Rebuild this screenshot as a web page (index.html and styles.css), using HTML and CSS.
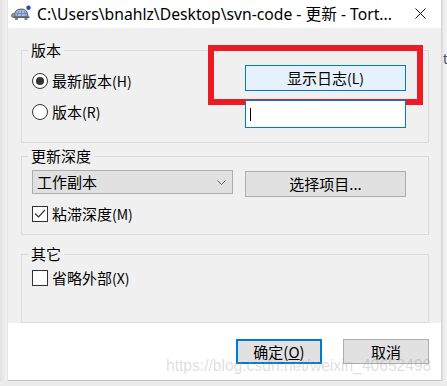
FILE: index.html
```html
<!DOCTYPE html>
<html lang="zh-CN">
<head>
<meta charset="utf-8">
<title>更新</title>
<link rel="stylesheet" href="styles.css">
</head>
<body>
<div class="screen">
  <div class="left-edge"></div>
  <div class="window">
    <div class="titlebar">
      <svg class="app-icon" width="20" height="17" viewBox="0 0 20 17">
        <path d="M3 12 Q3 4 10.5 4 Q17 4 17 12 Z" fill="#a9bde6" stroke="#4c5260" stroke-width="1"/>
        <path d="M6 11 L8 6 M10.5 11 L10.5 5 M15 11 L13 6 M4.5 8.5 L16.5 8.5" stroke="#6a7fb0" stroke-width="0.8" fill="none"/>
        <circle cx="2.3" cy="10.5" r="2" fill="#8c929c" stroke="#4c5260" stroke-width="0.6"/>
        <rect x="4" y="12" width="3" height="3" fill="#7d838d"/>
        <rect x="13.5" y="12" width="3" height="3" fill="#7d838d"/>
        <rect x="2.5" y="11.5" width="16" height="1.5" fill="#5a606b"/>
        <circle cx="17.5" cy="2.8" r="2.2" fill="#1e4ea8"/>
      </svg>
      <span class="title">C:\Users\bnahlz\Desktop\svn-code - 更新 - Tort...</span>
      <svg class="close" width="11" height="11" viewBox="0 0 11 11">
        <path d="M0.5 0.5 L10.5 10.5 M10.5 0.5 L0.5 10.5" stroke="#111" stroke-width="1" fill="none"/>
      </svg>
    </div>

    <div class="content">
      <fieldset class="group g-version">
        <legend>版本</legend>
        <div class="split">
          <div class="radios">
            <label class="opt"><span class="radio on"></span><span>最新版本<span class="k">(H)</span></span></label>
            <label class="opt"><span class="radio"></span><span>版本<span class="k">(R)</span></span></label>
          </div>
          <div class="col">
            <div class="btn btn-hot">显示日志<span class="k">(L)</span></div>
            <div class="edit"><span class="caret"></span></div>
          </div>
        </div>
      </fieldset>

      <fieldset class="group g-depth">
        <legend>更新深度</legend>
        <div class="split top-row">
          <div class="combo"><span>工作副本</span>
            <svg class="chev" width="9" height="5" viewBox="0 0 9 5"><path d="M0.5 0.5 L4.5 4.5 L8.5 0.5" stroke="#606060" stroke-width="1" fill="none"/></svg>
          </div>
          <div class="btn btn-pick">选择项目...</div>
        </div>
        <label class="opt"><span class="check"><svg width="14" height="14" viewBox="0 0 14 14"><path d="M2 6.5 L5.5 10 L12 3" stroke="#333" stroke-width="1.2" fill="none"/></svg></span><span>粘滞深度<span class="k">(M)</span></span></label>
      </fieldset>

      <fieldset class="group g-other">
        <legend>其它</legend>
        <label class="opt"><span class="check"></span><span>省略外部<span class="k">(X)</span></span></label>
      </fieldset>
    </div>

    <div class="footer">
      <div class="btn btn-ok">确定(<u>O</u>)</div>
      <div class="btn btn-cancel">取消</div>
    </div>

    <div class="annot"></div>
    <div class="watermark">https://blog.csdn.net/weixin_40652498</div>
  </div>
  <div class="right-edge"><span class="peek">t</span></div>
</div>
</body>
</html>
```

FILE: styles.css
```css
* { box-sizing: border-box; }
html, body { margin: 0; padding: 0; }
body {
  width: 447px;
  height: 386px;
  overflow: hidden;
  background: #ececec;
  font-family: "Noto Sans CJK SC", "Noto Sans", sans-serif;
  font-size: 15px;
  color: #000;
}
.screen {
  display: flex;
  height: 386px;
}
.left-edge {
  width: 8px;
  height: 381px;
  background: linear-gradient(to right, #e2e2e2, #f3f3f3 85%, #dcdcdc);
}
.window {
  position: relative;
  width: 433px;
  height: 381px;
  background: #fff;
  border-bottom: 1px solid #c4c4c4;
  display: flex;
  flex-direction: column;
}
.right-edge {
  width: 6px;
  height: 381px;
  background: linear-gradient(to right, #cfcfcf, #ebebeb 40%, #f2f2f2);
  padding-top: 47px;
  padding-left: 2px;
  overflow: hidden;
}
.peek {
  font-family: "Noto Sans", sans-serif;
  font-size: 14px;
  line-height: 16px;
  color: #4a4f6a;
}

/* title bar */
.titlebar {
  height: 28px;
  display: flex;
  align-items: center;
  padding-left: 3px;
  padding-right: 15px;
  background: #fff;
}
.app-icon { flex: none; margin-top: -1px; }
.title {
  flex: 1;
  margin-left: 6px;
  font-family: "Noto Sans", "Noto Sans CJK SC", sans-serif;
  font-size: 15.7px;
  white-space: nowrap;
  color: #000;
  margin-top: -1px;
}
.close { flex: none; margin-top: -1px; }

/* content */
.content {
  height: 295px;
  background: #f0f0f0;
  padding: 13px 12px 0 13px;
}
.group {
  margin: 0;
  min-width: 0;
  border: 1px solid #dadada;
  padding: 6px 22px 14px 10px;
}
.group legend {
  padding: 0 3px;
  margin-left: -4px;
  font-size: 15px;
  line-height: 18px;
}
.g-depth { margin-top: 4px; padding-top: 5px; padding-bottom: 12px; }
.g-other { margin-top: 10px; padding-top: 7px; padding-bottom: 36px; }

.split {
  display: grid;
  grid-template-columns: 1fr 161px;
  column-gap: 12px;
  align-items: start;
}
.radios {
  display: flex;
  flex-direction: column;
  gap: 15px;
  padding-top: 8px;
}
.col {
  display: flex;
  flex-direction: column;
  gap: 9px;
}

.opt {
  display: flex;
  align-items: center;
  gap: 4px;
  height: 16px;
  line-height: 16px;
  white-space: nowrap;
}
.k { font-size: 14px; }

.radio {
  flex: none;
  width: 16px;
  height: 16px;
  border: 1px solid #333;
  border-radius: 50%;
  background: #fff;
  display: flex;
  align-items: center;
  justify-content: center;
}
.radio.on::after {
  content: "";
  width: 8px;
  height: 8px;
  border-radius: 50%;
  background: #333;
}
.check {
  flex: none;
  width: 16px;
  height: 16px;
  border: 1px solid #333;
  background: #fff;
  display: flex;
  align-items: center;
  justify-content: center;
}
.check svg { display: block; }

.btn {
  display: flex;
  align-items: center;
  justify-content: center;
  background: #e1e1e1;
  border: 1px solid #adadad;
  font-size: 15px;
  line-height: 18px;
  white-space: nowrap;
}
.btn-hot {
  height: 26px;
  background: #e5f1fb;
  border-color: #0078d7;
}
.edit {
  height: 28px;
  background: #fff;
  border: 1px solid #0078d7;
  display: flex;
  align-items: center;
  padding-left: 4px;
  position: relative;
  z-index: 2;
}
.caret {
  width: 1px;
  height: 13px;
  background: #000;
}

.top-row { margin-bottom: 9px; }
.combo {
  height: 24px;
  background: #e1e1e1;
  border: 1px solid #adadad;
  display: flex;
  align-items: center;
  justify-content: space-between;
  padding: 0 6px 0 4px;
  line-height: 18px;
}
.btn-pick { height: 26px; margin-top: 1px; }

/* footer */
.footer {
  flex: 1;
  display: flex;
  justify-content: flex-end;
  align-items: flex-start;
  gap: 21px;
  padding: 16px 12px 0 0;
  background: #fff;
}
.btn-ok {
  width: 86px;
  height: 25px;
  border: 2px solid #0078d7;
}
.btn-ok u { text-underline-offset: 1px; }
.btn-cancel {
  width: 86px;
  height: 25px;
}

/* overlays */
.annot {
  position: absolute;
  left: 200px;
  top: 45px;
  width: 215px;
  height: 60px;
  border: 6px solid #ed1c24;
  z-index: 1;
}
.watermark {
  position: absolute;
  left: 158px;
  top: 357px;
  font-family: "Liberation Sans", Arial, sans-serif;
  font-size: 15.6px;
  line-height: 18px;
  color: rgba(150, 150, 150, 0.32);
  white-space: nowrap;
  z-index: 3;
}
```
